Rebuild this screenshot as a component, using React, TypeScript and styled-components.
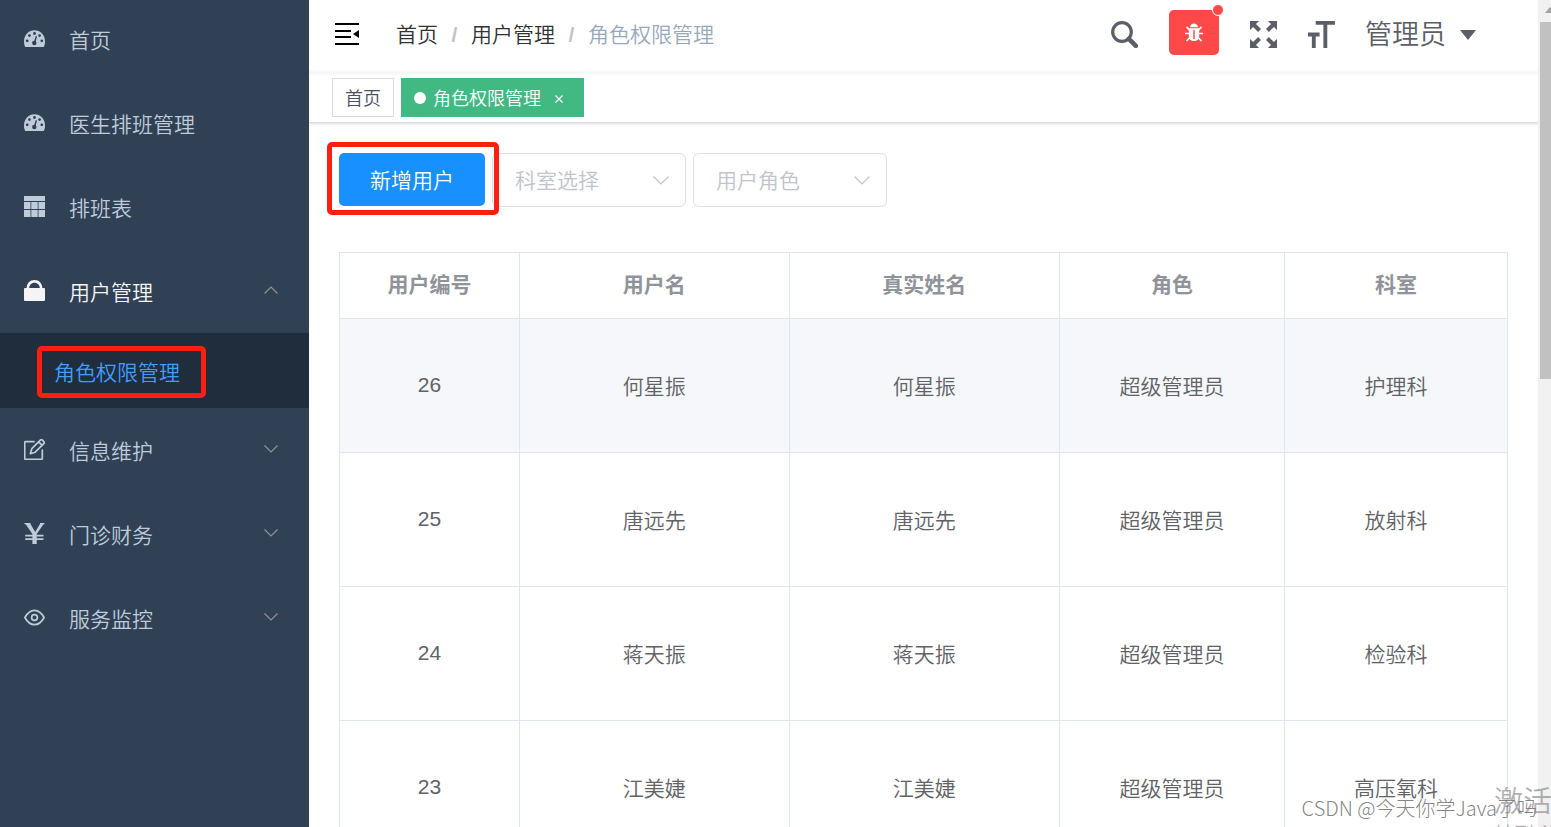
import React from 'react';
import styled, { createGlobalStyle } from 'styled-components';

const GlobalStyle = createGlobalStyle`
  *, *::before, *::after { box-sizing: border-box; }
  body {
    margin: 0;
    background: #fff;
    font-family: 'Liberation Sans', 'Noto Sans CJK SC', sans-serif;
    font-size: 21px;
    font-weight: 350;
    color: #606266;
  }
  button, select { font: inherit; }
  a { color: inherit; text-decoration: none; }
  svg { display: block; flex: none; }
`;

const Page = styled.div`
  position: relative;
  display: flex;
  height: 100vh;
  overflow: hidden;
`;

const Sidebar = styled.nav`
  flex: none;
  width: 309px;
  background: #304156;
  color: #bfcbd9;
`;

const Menu = styled.ul`
  list-style: none;
  margin: -3px 0 0;
  padding: 0;
`;

const MenuLink = styled.a<{ $open?: boolean }>`
  display: flex;
  align-items: center;
  gap: 24px;
  height: 84px;
  padding: 0 31px 2px 24px;
  color: ${(p) => (p.$open ? '#f4f4f5' : '#bfcbd9')};
`;

const MenuText = styled.span`
  flex: 1;
  padding-top: 2px;
`;

const SubMenu = styled.ul`
  list-style: none;
  margin: 0;
  padding: 0;
  background: #1f2d3d;
`;

const SubItem = styled.li`
  position: relative;
`;

const SubLink = styled.a`
  display: flex;
  align-items: center;
  height: 75px;
  padding: 0 0 0 54px;
  color: #409eff;
`;

const Highlight = styled.span`
  position: absolute;
  border: 5px solid #ff1f12;
  border-radius: 5px;
  pointer-events: none;
`;

const MenuHighlight = styled(Highlight)`
  top: 13px;
  left: 37px;
  width: 169px;
  height: 52px;
`;

const ButtonHighlight = styled(Highlight)`
  inset: -11px -14px -9px -12px;
`;

const Main = styled.div`
  flex: 1;
  min-width: 0;
  overflow: hidden;
`;

const Header = styled.header`
  display: flex;
  align-items: center;
  height: 72px;
  padding: 0 62px 4px 26px;
  box-shadow: 0 1px 4px rgba(0, 21, 41, 0.08);
`;

const IconButton = styled.button`
  display: flex;
  align-items: center;
  justify-content: center;
  padding: 0;
  border: 0;
  background: none;
  color: #5a5e66;
  cursor: pointer;
`;

const Crumbs = styled.ol`
  flex: 1;
  display: flex;
  list-style: none;
  margin: 0;
  padding: 0 0 2px 37px;
  color: #303133;
`;

const Crumb = styled.li`
  white-space: nowrap;
  & + &::before {
    content: '/';
    display: inline-block;
    width: 33px;
    text-align: center;
    font-weight: 700;
    color: #c0c4cc;
  }
  [aria-current] { color: #97a8be; }
`;

const Tools = styled.div`
  display: flex;
  align-items: center;
  gap: 30px;
`;

const ToolIcons = styled.div`
  display: flex;
  align-items: center;
  gap: 31px;
`;

const BugButton = styled(IconButton)`
  position: relative;
  width: 50px;
  height: 45px;
  margin-top: -3px;
  border-radius: 5px;
  background: #ff4949;
  color: #fff;
`;

const Dot = styled.span`
  position: absolute;
  top: -6px;
  right: -5px;
  width: 12px;
  height: 12px;
  border: 1px solid #fff;
  border-radius: 50%;
  background: #ff4949;
`;

const UserButton = styled(IconButton)`
  gap: 14px;
  padding-top: 1px;
  font-size: 27px;
  line-height: 40px;
`;

const Tags = styled.div`
  display: flex;
  gap: 7px;
  height: 51px;
  padding: 6px 23px 0;
  border-bottom: 1px solid #d8dce5;
  box-shadow: 0 1px 3px rgba(0, 0, 0, 0.12), 0 0 3px rgba(0, 0, 0, 0.04);
`;

const Tag = styled.a<{ $active?: boolean }>`
  display: flex;
  align-items: center;
  height: 39px;
  padding: 0 ${(p) => (p.$active ? '18px' : '12px')} 2px 12px;
  border: 1px solid ${(p) => (p.$active ? '#42b983' : '#d8dce5')};
  background: ${(p) => (p.$active ? '#42b983' : '#fff')};
  color: ${(p) => (p.$active ? '#fff' : '#495060')};
  font-size: 18px;
`;

const TagDot = styled.span`
  width: 12px;
  height: 12px;
  margin: 2px 7px 0 0;
  border-radius: 50%;
  background: #fff;
`;

const TagClose = styled.span`
  display: flex;
  margin: 4px 2px 0 14px;
`;

const Content = styled.main`
  padding: 30px;
`;

const Filters = styled.div`
  display: flex;
  align-items: flex-start;
  gap: 7px;
  margin-bottom: 45px;
`;

const AddWrap = styled.div`
  position: relative;
  z-index: 1;
`;

const AddButton = styled.button`
  display: block;
  width: 146px;
  height: 53px;
  padding: 0 0 2px;
  border: 0;
  border-radius: 5px;
  background: #1890ff;
  color: #fff;
  cursor: pointer;
`;

const SelectWrap = styled.label`
  position: relative;
  width: 194px;
  svg {
    position: absolute;
    top: 22px;
    right: 17px;
    pointer-events: none;
  }
`;

const Select = styled.select`
  appearance: none;
  display: block;
  width: 100%;
  height: 54px;
  padding: 0 45px 0 22px;
  border: 1px solid #dcdfe6;
  border-radius: 6px;
  background: #fff;
  color: #c0c4cc;
`;

const Table = styled.table`
  width: 100%;
  table-layout: fixed;
  border-collapse: collapse;
  text-align: center;
  color: #606266;
`;

const Col = styled.col<{ $share: number }>`
  width: ${(p) => p.$share}%;
`;

const Th = styled.th`
  height: 66px;
  padding: 0 0 5px;
  border: 1px solid #dfe6ec;
  color: #909399;
  font-weight: 700;
`;

const Row = styled.tr<{ $hover?: boolean }>`
  background: ${(p) => (p.$hover ? '#f5f7fa' : '#fff')};
`;

const Td = styled.td`
  height: 134px;
  padding: 0 0 1px;
  border: 1px solid #dfe6ec;
`;

const ScrollTrack = styled.div`
  flex: none;
  display: flex;
  flex-direction: column;
  width: 13px;
  padding-left: 2px;
  background: #f1f1f1;
  overflow: hidden;
`;

const ScrollArrow = styled.div`
  height: 22px;
  padding: 7px 0 0 5px;
`;

const ScrollThumb = styled.div`
  height: 357px;
  background: #c1c1c1;
`;

const Activation = styled.div`
  position: absolute;
  right: 0;
  bottom: 0;
  width: 57px;
  height: 46px;
  overflow: hidden;
  white-space: nowrap;
  color: rgba(110, 110, 110, 0.55);
  font-size: 29px;
  line-height: 42px;
  pointer-events: none;
  p { margin: 0; }
  p + p { font-size: 20px; line-height: 24px; }
`;

const Credit = styled.div`
  position: absolute;
  right: 14px;
  bottom: 4px;
  white-space: nowrap;
  color: rgba(125, 125, 125, 0.95);
  font-family: 'Noto Sans CJK SC', sans-serif;
  font-size: 20px;
  font-weight: 300;
  line-height: 30px;
  pointer-events: none;
`;

const Svg = ({ w, h, box, children }: { w: number; h: number; box?: string; children: React.ReactNode }) => (
  <svg width={w} height={h} viewBox={box ?? `0 0 ${w} ${h}`} fill="currentColor" aria-hidden="true">
    {children}
  </svg>
);

const Gauge = () => (
  <Svg w={21} h={21}>
    <path d="M1.2 19C.4 17.500 0 15.800 0 13.500 0 7 4.700 2.300 10.500 2.300S21 7 21 13.500c0 2.300-.4 4-1.200 5.500z" />
    <g fill="#304156">
      <circle cx="3.200" cy="12.800" r="1.400" />
      <circle cx="5.400" cy="7.600" r="1.400" />
      <circle cx="10.500" cy="5.500" r="1.400" />
      <circle cx="15.600" cy="7.600" r="1.400" />
      <circle cx="17.800" cy="12.800" r="1.400" />
      <circle cx="10.300" cy="15" r="2.200" />
      <path d="M11.800 8.100l1.200.3-1.700 6.800-1.600-.4z" />
    </g>
  </Svg>
);

const Grid = () => (
  <Svg w={21} h={21}>
    <path d="M0 0h21v5H0zM0 6h6.500v7H0zM7.300 6h6.400v7H7.300zM14.500 6H21v7h-6.500zM0 14h6.500v7H0zM7.300 14h6.400v7H7.300zM14.500 14H21v7h-6.500z" />
  </Svg>
);

const Lock = () => (
  <Svg w={21} h={21}>
    <path d="M1 8h1.700C2.700 3.500 6 0 10.500 0s7.800 3.500 7.800 8H20a1 1 0 0 1 1 1v11a1 1 0 0 1-1 1H1a1 1 0 0 1-1-1V9a1 1 0 0 1 1-1zm4.200 0h10.600c0-3-2.300-5.300-5.300-5.300S5.200 5 5.200 8z" />
  </Svg>
);

const Edit = () => (
  <Svg w={21} h={21}>
    <g fill="none" stroke="currentColor" strokeWidth="1.700" strokeLinejoin="round" strokeLinecap="round">
      <path d="M10 2.700H1.500a.8.8 0 0 0-.8.800v16a.8.800 0 0 0 .8.800h16a.8.800 0 0 0 .8-.8V11" />
      <path d="M6.300 14.700l1.500-5L16.300 1.200a1.500 1.500 0 0 1 2.100 0l1.400 1.400a1.500 1.500 0 0 1 0 2.100L11.200 13.200zM14.700 2.800l3.500 3.500" />
    </g>
  </Svg>
);

const Yen = () => (
  <Svg w={21} h={21}>
    <path d="M.5 0h6v1l4.700 8L16 1V0h4.500v1.200h-1L12.700 11v.7h6.800v1.900h-6.800v1.600h6.800v1.900h-6.800V21H8.400v-3.900H1.200v-1.900h7.200v-1.600H1.200v-1.900h7.200V11L1.700 1.200H.5z" />
  </Svg>
);

const Eye = () => (
  <Svg w={21} h={21}>
    <g fill="none" stroke="currentColor" strokeWidth="1.700">
      <path d="M.9 10.500C3.500 5.700 6.700 3.300 10.500 3.300s7 2.400 9.600 7.200c-2.600 4.800-5.800 7.200-9.600 7.200s-7-2.400-9.600-7.200z" />
      <circle cx="10.500" cy="10.500" r="2.900" />
    </g>
  </Svg>
);

const Chevron = ({ up, color, w = 14 }: { up?: boolean; color: string; w?: number }) => (
  <svg width={w} height={10} viewBox={`0 0 ${w} 10`} fill="none" stroke={color} strokeWidth="1.200" aria-hidden="true">
    <path d={up ? `M.5 8.500L${w / 2} 2 ${w - 0.5} 8.500` : `M.5 1.500L${w / 2} ${w / 2 + 1} ${w - 0.5} 1.500`} />
  </svg>
);

const Bug = () => (
  <Svg w={18} h={19}>
    <path d="M5 4.300C5.200 2 6.800.5 9 .5s3.800 1.500 4 3.800zM3.800 5.300h10.400v8.200c0 2.600-2 4.500-5.200 4.500s-5.200-1.900-5.200-4.500z" />
    <path fill="#ff4949" d="M8.300 7h1.400v9H8.300z" />
    <path
      fill="none"
      stroke="currentColor"
      strokeWidth="1.700"
      d="M1.500 3.800l3 3M16.500 3.800l-3 3M0 10.500h4.500M13.500 10.500H18M1.500 18l3.500-3.500M16.500 18L13 14.500"
    />
  </Svg>
);

const topMenu = [
  { text: '首页', icon: <Gauge /> },
  { text: '医生排班管理', icon: <Gauge /> },
  { text: '排班表', icon: <Grid /> },
];

const bottomMenu = [
  { text: '信息维护', icon: <Edit /> },
  { text: '门诊财务', icon: <Yen /> },
  { text: '服务监控', icon: <Eye /> },
];

const columns = [
  { title: '用户编号', share: 15.4 },
  { title: '用户名', share: 23.1 },
  { title: '真实姓名', share: 23.15 },
  { title: '角色', share: 19.25 },
  { title: '科室', share: 19.1 },
];

const users = [
  ['26', '何星振', '何星振', '超级管理员', '护理科'],
  ['25', '唐远先', '唐远先', '超级管理员', '放射科'],
  ['24', '蒋天振', '蒋天振', '超级管理员', '检验科'],
  ['23', '江美婕', '江美婕', '超级管理员', '高压氧科'],
];

export default function App() {
  return (
    <Page>
      <GlobalStyle />
      <Sidebar>
        <Menu>
          {topMenu.map((m) => (
            <li key={m.text}>
              <MenuLink href="#">
                {m.icon}
                <MenuText>{m.text}</MenuText>
              </MenuLink>
            </li>
          ))}
          <li>
            <MenuLink href="#" $open>
              <Lock />
              <MenuText>用户管理</MenuText>
              <Chevron up color="#909399" />
            </MenuLink>
            <SubMenu>
              <SubItem>
                <SubLink href="#">角色权限管理</SubLink>
                <MenuHighlight />
              </SubItem>
            </SubMenu>
          </li>
          {bottomMenu.map((m) => (
            <li key={m.text}>
              <MenuLink href="#">
                {m.icon}
                <MenuText>{m.text}</MenuText>
                <Chevron color="#909399" />
              </MenuLink>
            </li>
          ))}
        </Menu>
      </Sidebar>

      <Main>
        <Header>
          <IconButton aria-label="收起菜单">
            <svg width="24" height="22" viewBox="0 0 24 22" fill="#000" aria-hidden="true">
              <path d="M0 0h24v2H0zM0 7h16v2H0zM0 13h16v2H0zM0 20h24v2H0zM24 7v8l-6-4z" />
            </svg>
          </IconButton>
          <Crumbs>
            <Crumb><a href="#">首页</a></Crumb>
            <Crumb><a href="#">用户管理</a></Crumb>
            <Crumb><span aria-current="page">角色权限管理</span></Crumb>
          </Crumbs>
          <Tools>
            <ToolIcons>
              <IconButton aria-label="搜索">
                <Svg w={27} h={27}>
                  <g fill="none" stroke="currentColor">
                    <circle cx="11" cy="11" r="9.300" strokeWidth="3.200" />
                    <path d="M17.800 17.800l7 7" strokeWidth="4.600" strokeLinecap="round" />
                  </g>
                </Svg>
              </IconButton>
              <BugButton aria-label="错误日志">
                <Bug />
                <Dot />
              </BugButton>
              <IconButton aria-label="全屏">
                <Svg w={27} h={27} box="0 0 128 128">
                  <path d="M38.470 52L52 38.462l-23.648-23.670L43.209 0H.035L0 43.137l14.757-14.865L38.470 52zm74.773 47.726L89.526 76 76 89.536l23.648 23.672L84.795 128h43.174L128 84.863l-14.757 14.863zM89.538 52l23.668-23.648L128 43.207V.038L84.866 0 99.730 14.760 76 38.472 89.538 52zM38.460 76L14.792 99.651 0 84.794v43.173l43.137.033-14.865-14.757L52 89.530 38.460 76z" />
                </Svg>
              </IconButton>
              <IconButton aria-label="字体大小">
                <Svg w={27} h={27} box="0 0 128 128">
                  <path d="M0 54.857h54.857v18.286H36.571V128H18.286V73.143H0V54.857zM128 18.286H91.428V128H73V18.286H36.428V0H128v18.286z" />
                </Svg>
              </IconButton>
            </ToolIcons>
            <UserButton>
              管理员
              <Svg w={16} h={10}>
                <path d="M0 0h16L8 10z" />
              </Svg>
            </UserButton>
          </Tools>
        </Header>

        <Tags>
          <Tag href="#">首页</Tag>
          <Tag href="#" $active>
            <TagDot />
            角色权限管理
            <TagClose>
              <svg width="8" height="8" viewBox="0 0 8 8" stroke="#fff" strokeWidth="1.200" aria-hidden="true">
                <path d="M.5.5l7 7M7.500.5l-7 7" />
              </svg>
            </TagClose>
          </Tag>
        </Tags>

        <Content>
          <Filters>
            <AddWrap>
              <AddButton>新增用户</AddButton>
              <ButtonHighlight />
            </AddWrap>
            <SelectWrap>
              <Select aria-label="科室选择">
                <option>科室选择</option>
              </Select>
              <Chevron color="#c0c4cc" w={16} />
            </SelectWrap>
            <SelectWrap>
              <Select aria-label="用户角色">
                <option>用户角色</option>
              </Select>
              <Chevron color="#c0c4cc" w={16} />
            </SelectWrap>
          </Filters>

          <Table>
            <colgroup>
              {columns.map((c) => (
                <Col key={c.title} $share={c.share} />
              ))}
            </colgroup>
            <thead>
              <tr>
                {columns.map((c) => (
                  <Th key={c.title} scope="col">{c.title}</Th>
                ))}
              </tr>
            </thead>
            <tbody>
              {users.map((u, i) => (
                <Row key={u[0]} $hover={i === 0}>
                  {u.map((cell, j) => (
                    <Td key={j}>{cell}</Td>
                  ))}
                </Row>
              ))}
            </tbody>
          </Table>
        </Content>
      </Main>

      <ScrollTrack aria-hidden="true">
        <ScrollArrow>
          <svg width="10" height="6" viewBox="0 0 10 6" fill="#a3a3a3">
            <path d="M5 0l5 6H0z" />
          </svg>
        </ScrollArrow>
        <ScrollThumb />
      </ScrollTrack>

      <Activation>
        <p>激活 Windows</p>
        <p>转到“设置”以激活 Windows。</p>
      </Activation>
      <Credit>CSDN @今天你学Java了吗</Credit>
    </Page>
  );
}
